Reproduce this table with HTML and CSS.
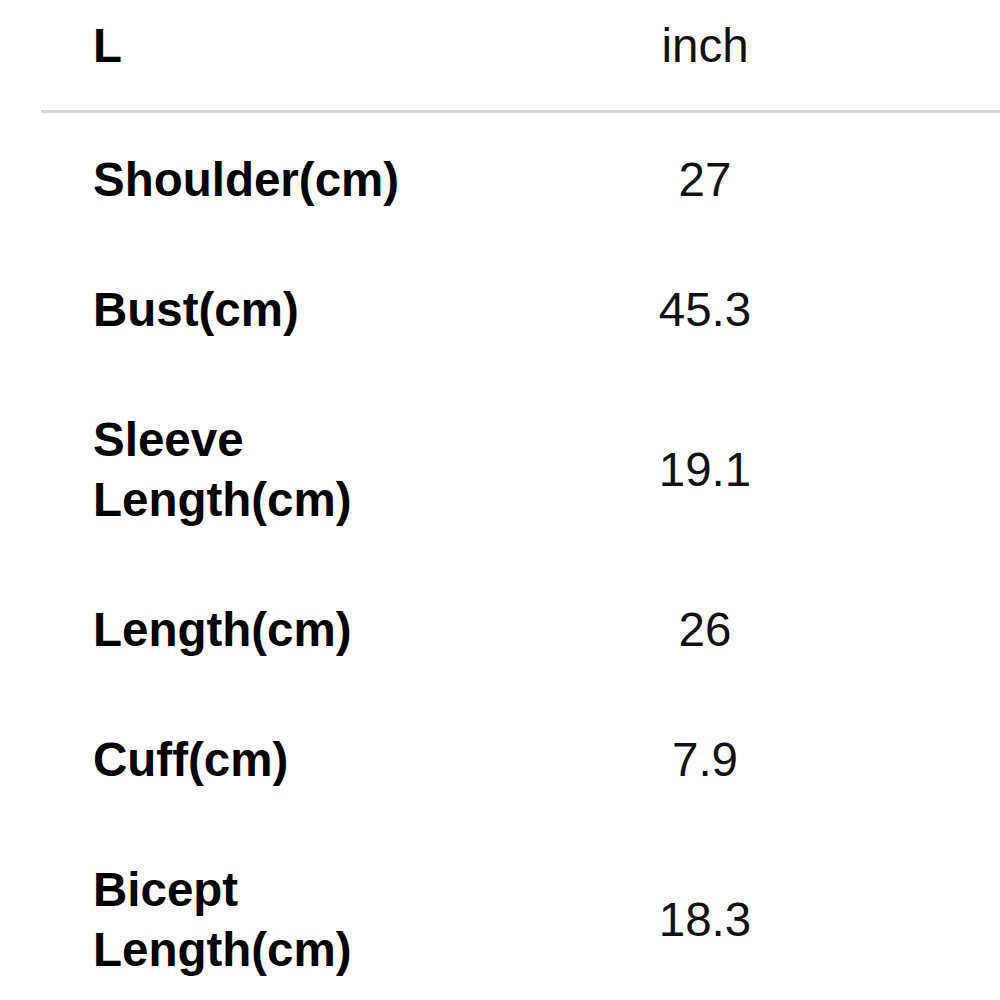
FILE: index.html
```html
<!DOCTYPE html>
<html lang="en">
<head>
<meta charset="utf-8">
<title>Size chart</title>
<link rel="stylesheet" href="styles.css">
</head>
<body>
<table class="size-table">
  <colgroup>
    <col class="col-label">
    <col class="col-value">
  </colgroup>
  <thead>
    <tr>
      <th class="label">L</th>
      <th class="value">inch</th>
    </tr>
  </thead>
  <tbody>
    <tr><td class="label">Shoulder(cm)</td><td class="value">27</td></tr>
    <tr><td class="label">Bust(cm)</td><td class="value">45.3</td></tr>
    <tr><td class="label">Sleeve Length(cm)</td><td class="value">19.1</td></tr>
    <tr><td class="label">Length(cm)</td><td class="value">26</td></tr>
    <tr><td class="label">Cuff(cm)</td><td class="value">7.9</td></tr>
    <tr><td class="label">Bicept Length(cm)</td><td class="value">18.3</td></tr>
  </tbody>
</table>
</body>
</html>
```

FILE: styles.css
```css
html, body {
  margin: 0;
  padding: 0;
  background: #ffffff;
}

body {
  font-family: "Liberation Sans", Arial, sans-serif;
  color: #000000;
  overflow: hidden;
}

.size-table {
  margin-left: 41px;
  width: 959px;
  border-collapse: collapse;
  table-layout: fixed;
  font-size: 47.5px;
  line-height: 60px;
}

.col-label { width: 369px; }
.col-value { width: 590px; }

.size-table th,
.size-table td {
  padding: 37px 0 33px;
  vertical-align: middle;
}

.size-table thead th {
  padding-top: 16px;
  padding-bottom: 34px;
  border-bottom: 3px solid #d4d4d4;
}

.label {
  text-align: left;
  font-weight: bold;
  padding-left: 52px !important;
  padding-right: 0;
}

.value {
  text-align: center;
  font-weight: normal;
  color: #111111;
}
```
